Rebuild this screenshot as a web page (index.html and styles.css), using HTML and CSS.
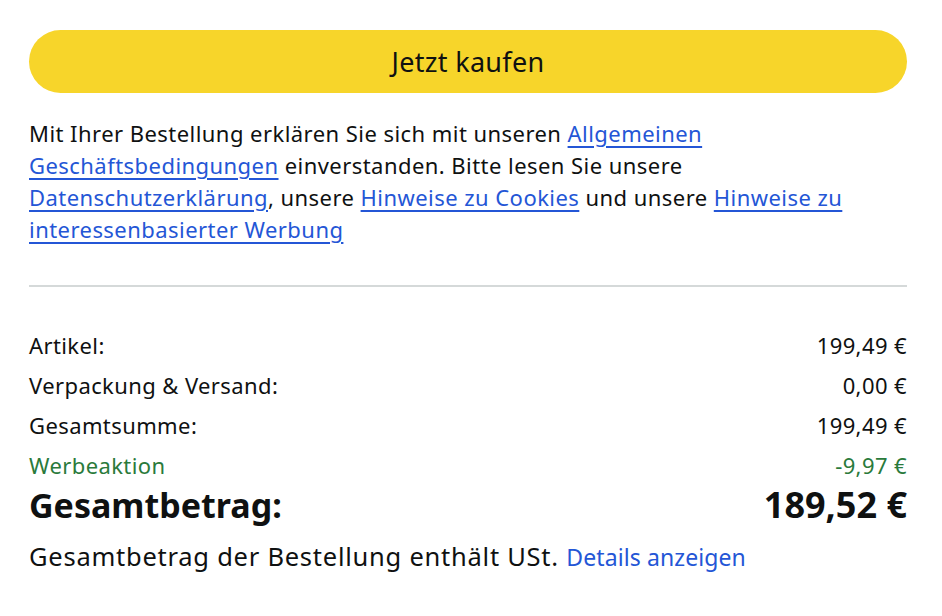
FILE: index.html
```html
<!DOCTYPE html>
<html lang="de">
<head>
<meta charset="utf-8">
<link rel="stylesheet" href="styles.css">
</head>
<body>
<div class="panel">
  <button class="buy">Jetzt kaufen</button>
  <p class="legal">Mit Ihrer Bestellung erklären Sie sich mit unseren <a href="#">Allgemeinen Geschäftsbedingungen</a> einverstanden. Bitte lesen Sie unsere <a href="#">Datenschutzerklärung</a>, unsere <a href="#">Hinweise zu Cookies</a> und unsere <a href="#">Hinweise zu interessenbasierter Werbung</a></p>
  <hr class="divider">
  <div class="summary">
    <div class="row"><span>Artikel:</span><span>199,49 €</span></div>
    <div class="row"><span>Verpackung &amp; Versand:</span><span>0,00 €</span></div>
    <div class="row"><span>Gesamtsumme:</span><span>199,49 €</span></div>
    <div class="row promo"><span>Werbeaktion</span><span>-9,97 €</span></div>
    <div class="row total"><span>Gesamtbetrag:</span><span class="total-price">189,52 €</span></div>
  </div>
  <p class="vat">Gesamtbetrag der Bestellung enthält USt. <a href="#" class="details">Details anzeigen</a></p>
</div>
</body>
</html>
```
FILE: styles.css
```css
html, body {
  margin: 0;
  padding: 0;
  background: #fff;
}
body {
  font-family: "Noto Sans", "Open Sans", sans-serif;
  color: #0f1111;
}
.panel {
  padding: 30px 35px 0 29px;
}
.buy {
  display: block;
  width: 100%;
  height: 63px;
  border: none;
  border-radius: 32px;
  background: #f7d52a;
  color: #0f1111;
  font-family: inherit;
  font-size: 27px;
  letter-spacing: 0.3px;
  padding: 0;
}
.legal {
  margin: 24px 0 0;
  font-size: 22px;
  letter-spacing: 0.45px;
  line-height: 32px;
}
a {
  color: #2456d6;
  text-decoration: underline;
  text-decoration-thickness: 1.5px;
  text-underline-offset: 4px;
}
.divider {
  border: none;
  border-top: 2px solid #d5d9d9;
  margin: 40px 0 0;
}
.summary {
  margin-top: 38px;
  display: flex;
  flex-direction: column;
}
.row {
  display: flex;
  justify-content: space-between;
  font-size: 22px;
  letter-spacing: 0.4px;
  line-height: 40px;
}
.promo { color: #2a7a3b; }
.total {
  font-size: 34px;
  font-weight: bold;
  letter-spacing: 0;
  line-height: 40px;
}
.total-price {
  font-size: 36px;
}
.vat {
  margin: 14px 0 0;
  font-size: 25.5px;
  letter-spacing: 0.75px;
  line-height: 34px;
}
.details {
  font-size: 23px;
  letter-spacing: 0.1px;
  text-decoration: none;
}
```
